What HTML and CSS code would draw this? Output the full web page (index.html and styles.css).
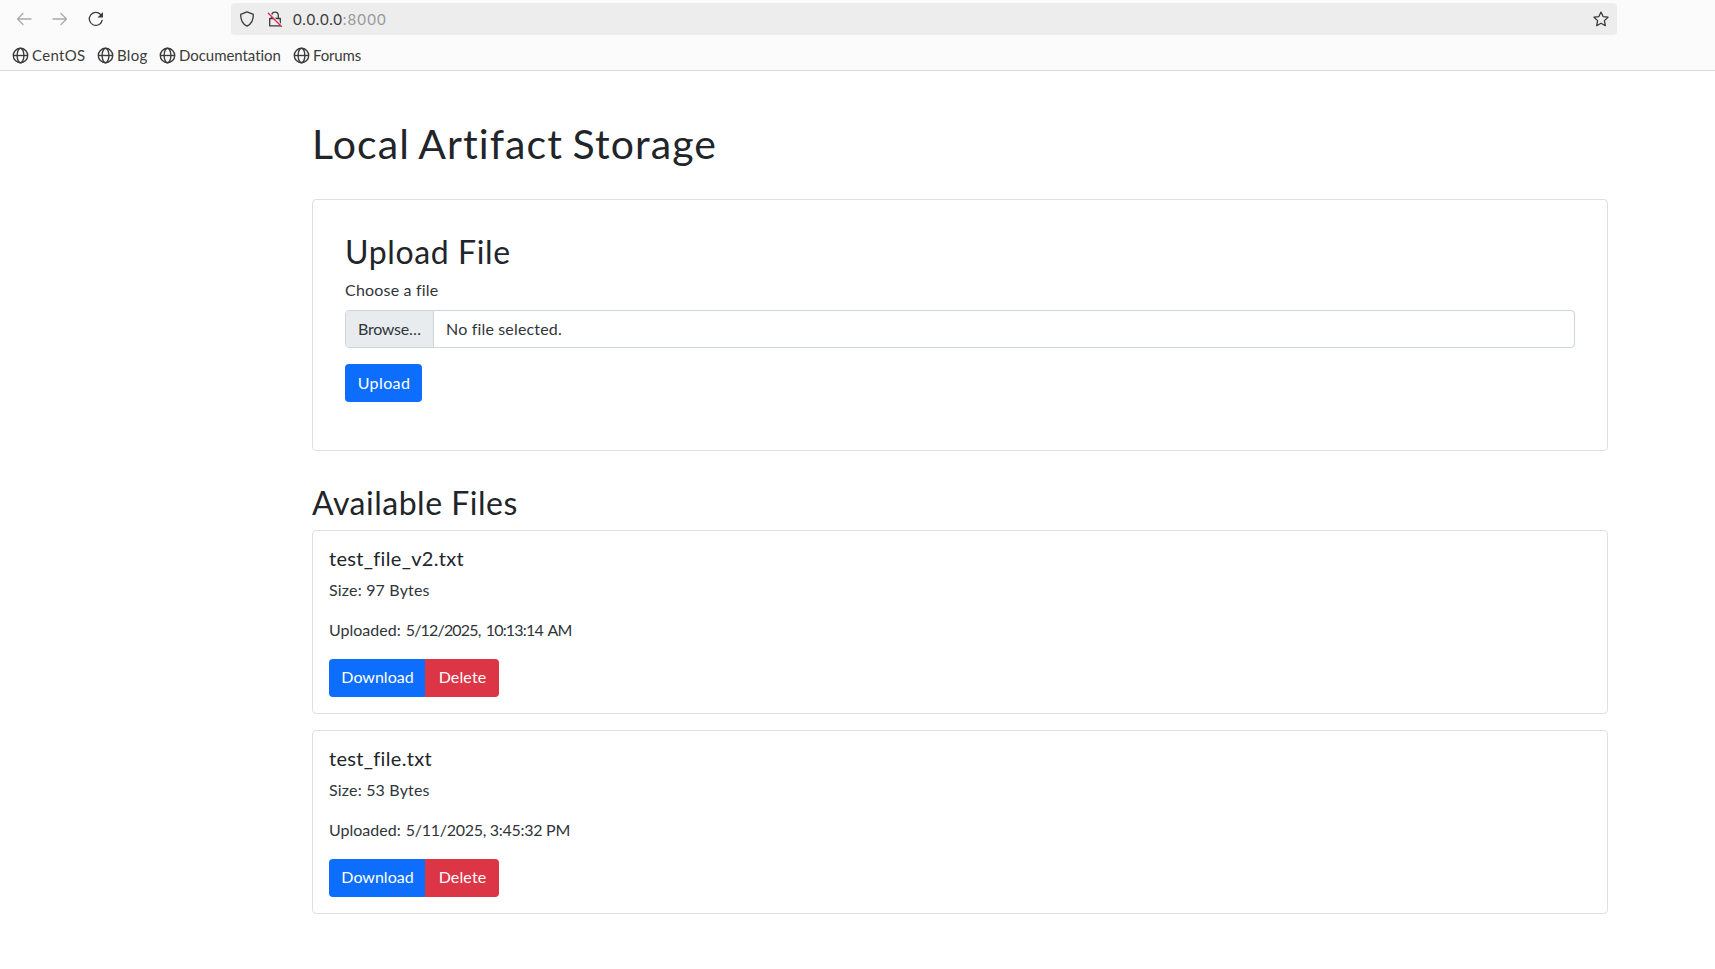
FILE: index.html
```
<!DOCTYPE html>
<html lang="en">
<head>
<meta charset="utf-8">
<title>Local Artifact Storage</title>
<link rel="stylesheet" href="styles.css">
</head>
<body>
<svg class="defs" width="0" height="0">
  <symbol id="globe" viewBox="0 0 16 16"><g fill="none" stroke="currentColor" stroke-width="1.3"><circle cx="8" cy="8" r="6.8"/><ellipse cx="8" cy="8" rx="3.2" ry="6.8"/><path d="M1.2 8h13.6"/></g></symbol>
</svg>
<header class="browser">
  <div class="navbar">
    <div class="nav-buttons">
      <svg class="icon faded" viewBox="0 0 16 16"><path d="M15 8H1.5M7 2.5L1.5 8L7 13.5"/></svg>
      <svg class="icon faded" viewBox="0 0 16 16"><path d="M1 8h13.5M9 2.5L14.500 8L9 13.5"/></svg>
      <svg class="icon" viewBox="0 0 16 16"><path d="M14.100 9.500A6.500 6.500 0 1 1 12.600 3.500"/><path class="solid" d="M15 1v5.500H9.500z"/></svg>
    </div>
    <div class="urlbar">
      <svg class="icon shield" viewBox="0 0 16 16"><path d="M8 .9L14.300 3.300C14.500 8.800 12.500 13 8 15.200C3.500 13 1.500 8.800 1.700 3.300z"/></svg>
      <svg class="icon lock" viewBox="0 0 16 16"><path d="M2.700 7.500h10.600v7.300H2.700zM4.700 7.500V4.500a3.300 3.300 0 0 1 6.600 0v3"/><path class="slash-gap" d="M2 1.700L15.200 14.900"/><path class="slash" d="M1.300 2.300L14.500 15.500"/></svg>
      <span class="url"><span class="host">0.0.0.0</span><span class="port">:8000</span></span>
      <svg class="icon star" viewBox="0 0 16 16"><path d="M8 1.100L10.100 5.600L15 6.200L11.400 9.600L12.300 14.700L8 12.200L3.700 14.700L4.600 9.600L1 6.200L5.900 5.600z"/></svg>
    </div>
  </div>
  <nav class="bookmarks">
    <a class="bookmark centos"><svg class="globe"><use href="#globe"/></svg><span>CentOS</span></a>
    <a class="bookmark blog"><svg class="globe"><use href="#globe"/></svg><span>Blog</span></a>
    <a class="bookmark docs"><svg class="globe"><use href="#globe"/></svg><span>Documentation</span></a>
    <a class="bookmark forums"><svg class="globe"><use href="#globe"/></svg><span>Forums</span></a>
  </nav>
</header>
<main class="container">
  <h1>Local Artifact Storage</h1>
  <section class="card upload-card">
    <h2 class="upload-title">Upload File</h2>
    <label class="form-label">Choose a file</label>
    <div class="file-input"><span class="browse">Browse…</span><span class="file-status">No file selected.</span></div>
    <button class="btn primary upload">Upload</button>
  </section>
  <h2 class="list-title">Available Files</h2>
  <article class="card file-card">
    <h5>test_file_v2.txt</h5>
    <p class="size">Size: 97 Bytes</p>
    <p>Uploaded: <span class="date-first">5/12/2025, 10:13:14 AM</span></p>
    <div class="btn-group"><button class="btn primary download">Download</button><button class="btn danger">Delete</button></div>
  </article>
  <article class="card file-card">
    <h5>test_file.txt</h5>
    <p class="size">Size: 53 Bytes</p>
    <p>Uploaded: <span class="date-second">5/11/2025, 3:45:32 PM</span></p>
    <div class="btn-group"><button class="btn primary download">Download</button><button class="btn danger">Delete</button></div>
  </article>
</main>
</body>
</html>
```
FILE: styles.css
```
* { box-sizing: border-box; }
body {
  margin: 0;
  background: #fff;
  color: #30353a;
  font: 400 16px/24px Lato, "Open Sans", sans-serif;
  overflow: hidden;
}
.defs { display: block; }

/* Browser chrome */
.browser {
  height: 71px;
  background: #fbfbfb;
  border-bottom: 1px solid #dcdcdc;
  color: #3b3b3b;
  font-size: 15px;
}
.navbar { display: flex; height: 38px; padding-top: 3px; }
.nav-buttons { display: flex; align-items: center; gap: 20px; width: 231px; height: 32px; padding-left: 16px; }
.icon {
  width: 16px;
  height: 16px;
  flex: none;
  fill: none;
  stroke: currentColor;
  stroke-width: 1.3;
  stroke-linejoin: round;
  stroke-linecap: round;
}
.faded { color: #aaa; }
.solid { fill: currentColor; stroke: none; }
.urlbar {
  display: flex;
  align-items: center;
  width: 1386px;
  height: 32px;
  padding: 0 8px;
  border-radius: 4px;
  background: #ededed;
}
.lock { margin-left: 12px; }
.slash-gap { stroke: #ededed; stroke-width: 1.2; }
.slash { stroke: #e22850; }
.url { flex: 1; margin-left: 10px; }
.host { letter-spacing: .6px; }
.port { color: #999; letter-spacing: 1.15px; }
.bookmarks { display: flex; align-items: center; height: 32px; padding: 2px 0 0 12px; }
.bookmark { display: flex; align-items: center; gap: 3px; line-height: 22px; }
.bookmark span { padding-bottom: 1px; }
.globe { width: 17px; height: 17px; flex: none; }
.centos { width: 85px; letter-spacing: .3px; }
.blog { width: 62px; letter-spacing: .32px; }
.docs { width: 134px; letter-spacing: -.05px; }
.forums { letter-spacing: -.15px; }

/* Page */
.container { width: 1320px; margin-left: 300px; padding: 48px 12px 0; }
h1, h2, h5, p { margin: 0; }
h1, h2, h5 { color: #212529; line-height: 1.2; font-weight: 400; }
h1 {
  padding-top: 1px;
  margin-bottom: 31px;
  font-size: 41px;
  line-height: 48px;
  letter-spacing: 1.1px;
  word-spacing: -2px;
}
h2 { padding-top: 1px; margin-bottom: 7px; font-size: 32px; }
h5 { margin-bottom: 8px; font-size: 20px; letter-spacing: .32px; }
.card { border: 1px solid #dfdfdf; border-radius: 4px; }
.upload-card { height: 252px; padding: 32px; }
.upload-title { letter-spacing: .62px; }
.form-label { display: block; margin-bottom: 8px; letter-spacing: .19px; }
.file-input {
  display: flex;
  height: 38px;
  margin-bottom: 16px;
  border: 1px solid #ced4da;
  border-radius: 4px;
  overflow: hidden;
  line-height: 36px;
}
.browse {
  width: 88px;
  padding-left: 12px;
  background: #e9ecef;
  border-right: 1px solid #ced4da;
  letter-spacing: -.25px;
}
.file-status { padding-left: 12px; letter-spacing: .17px; }
.btn {
  height: 38px;
  padding: 0 0 0 1px;
  border: 0;
  border-radius: 4px;
  color: #fff;
  font: inherit;
}
.primary { background: #0d6efd; }
.danger { width: 74px; background: #dc3545; letter-spacing: .13px; }
.upload { width: 77px; letter-spacing: .4px; }
.download { width: 96px; }
.list-title { margin: 32px 0 8px; letter-spacing: .51px; }
.file-card { height: 184px; margin-bottom: 16px; padding: 15px 16px 16px; }
.file-card p { margin-bottom: 16px; }
.size { letter-spacing: .18px; }
.date-first { margin-left: 1px; letter-spacing: -.65px; word-spacing: 2px; }
.date-second { margin-left: 1px; letter-spacing: -.28px; }
.btn-group { display: flex; padding-top: 1px; }
.btn-group .btn { padding-bottom: 2px; }
.btn-group .primary { border-radius: 4px 0 0 4px; }
.btn-group .danger { border-radius: 0 4px 4px 0; }
.date-first { letter-spacing: -.83px; }
```
